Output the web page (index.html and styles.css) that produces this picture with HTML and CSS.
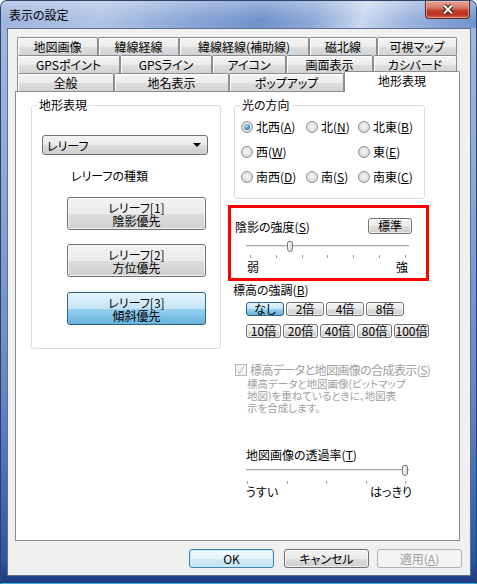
FILE: index.html
```html
<!DOCTYPE html>
<html lang="ja">
<head>
<meta charset="UTF-8">
<meta name="viewport" content="width=device-width, initial-scale=1.0">
<title>表示の設定</title>
<link rel="stylesheet" href="styles.css">
</head>
<body>
<div class="window">
    <div class="titlebar">
        <span class="title">表示の設定</span>
        <div class="close">
            <svg width="12" height="11" viewBox="0 0 12 11">
                <path d="M2 1.5 L10 9.5 M10 1.5 L2 9.5" stroke="#4a1711" stroke-width="4"/>
                <path d="M2 1.5 L10 9.5 M10 1.5 L2 9.5" stroke="#ffffff" stroke-width="2"/>
            </svg>
        </div>
    </div>

    <div class="client">
        <div class="tabs">
            <div class="tab-row row1">
                <div class="tab">地図画像</div>
                <div class="tab">緯線経線</div>
                <div class="tab">緯線経線(補助線)</div>
                <div class="tab">磁北線</div>
                <div class="tab">可視マップ</div>
            </div>
            <div class="tab-row row2">
                <div class="tab">GPSポイント</div>
                <div class="tab">GPSライン</div>
                <div class="tab">アイコン</div>
                <div class="tab">画面表示</div>
                <div class="tab">カシバード</div>
            </div>
            <div class="tab-row row3">
                <div class="tab">全般</div>
                <div class="tab">地名表示</div>
                <div class="tab">ポップアップ</div>
                <div class="tab active">地形表現</div>
            </div>
        </div>

        <div class="panel">
            <fieldset class="group relief-group">
                <legend>地形表現</legend>
                <div class="combo">
                    <span>レリーフ</span>
                    <span class="combo-arrow"></span>
                </div>
                <div class="caption">レリーフの種類</div>
                <div class="btn relief-btn">レリーフ[1]<br>陰影優先</div>
                <div class="btn relief-btn">レリーフ[2]<br>方位優先</div>
                <div class="btn relief-btn pressed">レリーフ[3]<br>傾斜優先</div>
            </fieldset>

            <div class="right-col">
                <fieldset class="group light-group">
                    <legend>光の方向</legend>
                    <div class="radio-grid">
                        <label class="radio"><span class="dot checked"></span><span>北西(<u>A</u>)</span></label>
                        <label class="radio"><span class="dot"></span><span>北(<u>N</u>)</span></label>
                        <label class="radio"><span class="dot"></span><span>北東(<u>B</u>)</span></label>
                        <label class="radio"><span class="dot"></span><span>西(<u>W</u>)</span></label>
                        <div></div>
                        <label class="radio"><span class="dot"></span><span>東(<u>E</u>)</span></label>
                        <label class="radio"><span class="dot"></span><span>南西(<u>D</u>)</span></label>
                        <label class="radio"><span class="dot"></span><span>南(<u>S</u>)</span></label>
                        <label class="radio"><span class="dot"></span><span>南東(<u>C</u>)</span></label>
                    </div>
                </fieldset>

                <div class="highlight">
                    <div class="shade-head">
                        <span>陰影の強度(<u>S</u>)</span>
                        <div class="btn small-btn std-btn">標準</div>
                    </div>
                    <div class="slider shade-slider">
                        <div class="track"><span class="thumb"></span></div>
                        <div class="ticks"><i></i><i></i><i></i><i></i><i></i><i></i><i></i></div>
                    </div>
                    <div class="slider-labels shade-labels"><span>弱</span><span>強</span></div>
                </div>

                <div class="label-line elev-label">標高の強調(<u>B</u>)</div>
                <div class="mult-row">
                    <div class="btn small-btn pressed">なし</div>
                    <div class="btn small-btn">2倍</div>
                    <div class="btn small-btn">4倍</div>
                    <div class="btn small-btn">8倍</div>
                </div>
                <div class="mult-row second">
                    <div class="btn small-btn">10倍</div>
                    <div class="btn small-btn">20倍</div>
                    <div class="btn small-btn">40倍</div>
                    <div class="btn small-btn">80倍</div>
                    <div class="btn small-btn">100倍</div>
                </div>

                <label class="check disabled"><span class="box">✓</span><span class="check-text">標高データと地図画像の合成表示(<u>S</u>)</span></label>
                <p class="note">標高データと地図画像(ビットマップ<br>地図)を重ねているときに、地図表<br>示を合成します。</p>

                <div class="label-line alpha-label">地図画像の透過率(<u>T</u>)</div>
                <div class="slider alpha-slider">
                    <div class="track"><span class="thumb"></span></div>
                    <div class="ticks"><i></i><i></i><i></i><i></i><i></i></div>
                </div>
                <div class="slider-labels alpha-labels"><span>うすい</span><span>はっきり</span></div>
            </div>
        </div>

        <div class="footer">
            <div class="btn footer-btn default">OK</div>
            <div class="btn footer-btn">キャンセル</div>
            <div class="btn footer-btn disabled">適用(<u>A</u>)</div>
        </div>
    </div>
</div>
</body>
</html>
```

FILE: styles.css
```css
* {
    box-sizing: border-box;
}

body {
    margin: 0;
    font-family: "Noto Sans CJK JP", "Noto Sans", sans-serif;
    font-size: 12px;
    font-feature-settings: "palt";
    color: #000;
    background: #fff;
}

u {
    text-decoration: underline;
    text-underline-offset: 1px;
}

/* window frame */
.window {
    width: 477px;
    height: 584px;
    display: flex;
    flex-direction: column;
    padding: 0 5px 7px 6px;
    border: 1px solid #2f426a;
    border-bottom-color: #3fb0ea;
    border-radius: 7px 7px 0 0;
    background: linear-gradient(180deg, #a4badf 0%, #8ea9d8 30%, #5f84c4 70%, #2d56a3 96%, #1d3d80 100%);
}

.titlebar {
    height: 27px;
    display: flex;
    justify-content: space-between;
    align-items: flex-start;
    margin: 0 -5px 0 -6px;
    padding: 0 6px 0 7px;
    border-radius: 6px 6px 0 0;
    background:
        linear-gradient(180deg, rgba(255, 255, 255, 0.3), rgba(255, 255, 255, 0) 70%),
        linear-gradient(105deg, #9db4de 0%, #b0c4e6 22%, #8aa6d7 40%, #7092cc 55%, #8eaad9 66%, #c9d7ef 76%, #9ab2de 86%, #7193cd 100%);
}

.title {
    line-height: 28px;
    padding-left: 1px;
}

.close {
    width: 45px;
    height: 18px;
    display: flex;
    align-items: center;
    justify-content: center;
    border: 1px solid #5b2a25;
    border-top: none;
    border-radius: 0 0 4px 4px;
    background: linear-gradient(180deg, #e6a597 0%, #d77a68 40%, #c1412f 55%, #b8321f 80%, #d66b4f 100%);
    box-shadow: inset 0 0 0 1px rgba(255, 210, 200, 0.5);
}

.client {
    flex: 1;
    display: flex;
    flex-direction: column;
    padding: 8px 8px 0 0;
    border: 1px solid #5c6e8c;
    background: #f0f0f0;
}

/* tabs */
.tabs {
    margin-left: 9px;
}

.tab-row {
    display: flex;
    height: 18px;
}

.tab {
    height: 18px;
    line-height: 17px;
    text-align: center;
    white-space: nowrap;
    border: 1px solid #898c95;
    border-bottom: none;
    border-radius: 2px 2px 0 0;
    background: linear-gradient(180deg, #f4f4f4 0%, #ececec 50%, #dedede 51%, #d3d3d3 100%);
    box-shadow: inset 1px 1px 0 #fff;
}

.row1 .tab:nth-child(1) { width: 81px; }
.row1 .tab:nth-child(2) { width: 81px; }
.row1 .tab:nth-child(3) { width: 130px; }
.row1 .tab:nth-child(4) { width: 68px; }
.row1 .tab:nth-child(5) { width: 80px; }

.row2 .tab:nth-child(1) { width: 103px; }
.row2 .tab:nth-child(2) { width: 92px; }
.row2 .tab:nth-child(3) { width: 74px; }
.row2 .tab:nth-child(4) { width: 87px; }
.row2 .tab:nth-child(5) { width: 84px; }

.row3 .tab:nth-child(1) { width: 97px; }
.row3 .tab:nth-child(2) { width: 115px; }
.row3 .tab:nth-child(3) { width: 115px; }

.tab.active {
    position: relative;
    z-index: 2;
    width: 116px;
    height: 21px;
    margin-top: -2px;
    line-height: 18px;
    background: #fff;
    box-shadow: none;
}

/* panel */
.panel {
    width: 445px;
    height: 450px;
    margin-left: 7px;
    display: flex;
    padding: 6px 0 0 15px;
    border: 1px solid #898c95;
    background: #fff;
}

.group {
    margin: 0;
    padding: 0;
    min-width: 0;
    border: 1px solid #d5dfe5;
    border-radius: 3px;
}

.group legend {
    margin-left: 5px;
    padding: 0 2px;
    line-height: 14px;
}

.relief-group {
    width: 190px;
    height: 251px;
}

.combo {
    width: 166px;
    height: 20px;
    margin: 23px 0 0 10px;
    display: flex;
    justify-content: space-between;
    align-items: center;
    padding: 0 6px 0 4px;
    border: 1px solid #707070;
    border-radius: 3px;
    background: linear-gradient(180deg, #f2f2f2 0%, #ebebeb 50%, #dddddd 51%, #cfcfcf 100%);
}

.combo-arrow {
    width: 0;
    height: 0;
    border-left: 4px solid transparent;
    border-right: 4px solid transparent;
    border-top: 4px solid #000;
}

.caption {
    margin: 14px 0 0 39px;
    line-height: 14px;
}

.btn {
    text-align: center;
    white-space: nowrap;
    border: 1px solid #707070;
    border-radius: 3px;
    background: linear-gradient(180deg, #f2f2f2 0%, #ebebeb 50%, #dddddd 51%, #cfcfcf 100%);
    box-shadow: inset 0 0 0 1px rgba(255, 255, 255, 0.7);
}

.btn.pressed {
    border-color: #2c628b;
    background: linear-gradient(180deg, #e5f4fc 0%, #c4e5f6 50%, #98d1ef 51%, #68b3db 100%);
    box-shadow: none;
}

.relief-btn {
    width: 139px;
    height: 33px;
    margin: 14px 0 0 35px;
    padding-top: 3px;
    line-height: 13px;
}

.relief-btn.pressed {
    margin-top: 15px;
}

/* right column */
.right-col {
    width: 201px;
    margin-left: 7px;
    display: flex;
    flex-direction: column;
}

.light-group {
    width: 191px;
    height: 101px;
    margin-left: 6px;
}

.radio-grid {
    display: grid;
    grid-template-columns: 65px 52px auto;
    row-gap: 11px;
    margin-top: 8px;
    padding-left: 6px;
}

.radio {
    display: flex;
    align-items: center;
    gap: 3px;
    line-height: 14px;
    white-space: nowrap;
}

.dot {
    flex: none;
    width: 12px;
    height: 12px;
    border-radius: 50%;
    border: 1px solid #8f8f8f;
    background: radial-gradient(circle at 50% 45%, #f6f6f6 0%, #e4e4e4 50%, #c9c9c9 100%);
    display: flex;
    align-items: center;
    justify-content: center;
}

.dot.checked::after {
    content: "";
    width: 6px;
    height: 6px;
    border-radius: 50%;
    background: radial-gradient(circle at 40% 35%, #b9e5fb 0%, #3a8fd0 55%, #1a5a94 100%);
}

.highlight {
    height: 76px;
    margin-top: 6px;
    padding: 10px 14px 0 4px;
    border: 3px solid #ff0000;
}

.shade-head {
    display: flex;
    justify-content: space-between;
    align-items: center;
    height: 16px;
}

.small-btn {
    height: 14px;
    line-height: 12px;
}

.std-btn {
    width: 44px;
    height: 16px;
    line-height: 14px;
}

.slider {
    width: 163px;
}

.track {
    position: relative;
    height: 3px;
    border-top: 1px solid #a8a8a8;
    border-bottom: 1px solid #fff;
    background: #e6e6e6;
}

.thumb {
    position: absolute;
    top: -5px;
    width: 6px;
    height: 11px;
    border: 1px solid #7a7a7a;
    border-radius: 2px 2px 3px 3px;
    background: linear-gradient(90deg, #f6f6f6, #dadada);
}

.ticks {
    display: flex;
    justify-content: space-between;
}

.ticks i {
    width: 1px;
    height: 3px;
    background: #a0a0a0;
}

.shade-slider {
    margin: 11px 0 0 11px;
}

.shade-slider .thumb {
    left: 41px;
}

.shade-slider .ticks {
    margin-top: 7px;
    padding: 0 3px 0 4px;
}

.slider-labels {
    display: flex;
    justify-content: space-between;
    line-height: 14px;
}

.shade-labels {
    width: 161px;
    margin: 2px 0 0 12px;
}

.label-line {
    line-height: 14px;
}

.elev-label {
    margin-top: 2px;
    padding-left: 5px;
}

.mult-row {
    display: flex;
    gap: 2px;
    margin: 5px 0 0 18px;
}

.mult-row .small-btn {
    width: 38px;
}

.mult-row.second {
    margin-top: 8px;
}

.check {
    display: flex;
    align-items: center;
    gap: 3px;
    margin: 25px 0 0 7px;
    line-height: 14px;
    white-space: nowrap;
    color: #a0a0a0;
}

.check-text {
    letter-spacing: -0.6px;
}

.check .box {
    flex: none;
    width: 12px;
    height: 12px;
    border: 1px solid #b5b5b5;
    background: #f4f4f4;
    color: #b0b0b0;
    font-size: 10px;
    line-height: 10px;
    text-align: center;
}

.note {
    margin: 1px 0 0 19px;
    font-size: 10.5px;
    line-height: 12px;
    white-space: nowrap;
    color: #a0a0a0;
}

.alpha-label {
    margin-top: 34px;
    padding-left: 18px;
}

.alpha-slider {
    margin: 7px 0 0 18px;
}

.alpha-slider .thumb {
    left: 156px;
}

.alpha-slider .ticks {
    margin-top: 9px;
    padding: 0 3px 0 1px;
}

.alpha-labels {
    width: 166px;
    margin: 1px 0 0 18px;
}

/* footer buttons */
.footer {
    display: flex;
    justify-content: flex-end;
    margin-top: 8px;
}

.footer-btn {
    width: 85px;
    height: 19px;
    line-height: 17px;
    margin-left: 8px;
}

.footer-btn.default {
    margin-left: 0;
    border-color: #3c7fb1;
    background: linear-gradient(180deg, #f2f9fd 0%, #e3f2fb 50%, #d2eaf8 51%, #c3e2f5 100%);
    box-shadow: inset 0 0 0 1px #c8ebfb;
}

.footer-btn:nth-child(2) {
    margin-left: 10px;
}

.footer-btn.disabled {
    border-color: #adb2b5;
    background: #f4f4f4;
    color: #a0a0a0;
    box-shadow: none;
}
```
